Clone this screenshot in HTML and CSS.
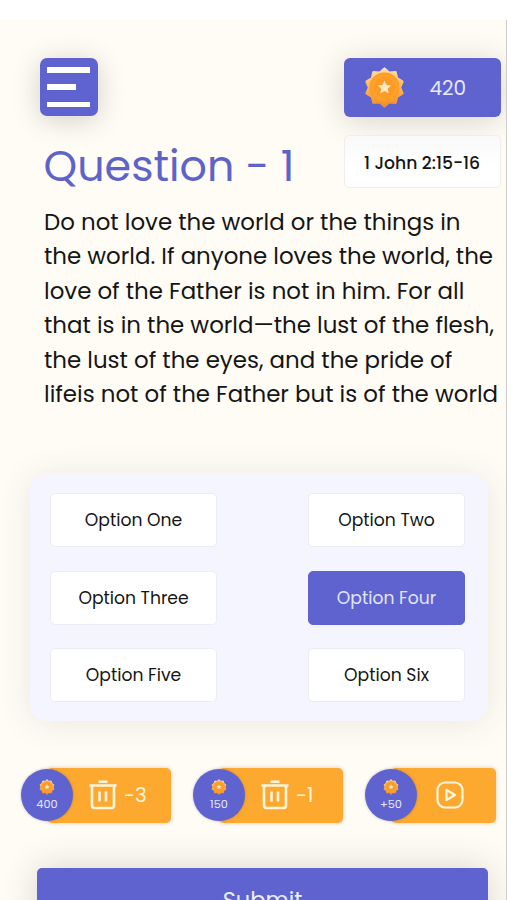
FILE: index.html
```html
<!DOCTYPE html>
<html lang="en">
<head>
  <meta charset="UTF-8" />
  <meta name="viewport" content="width=device-width, initial-scale=1.0" />
  <title>Bible Quiz</title>
  <link rel="stylesheet" href="styles.css">
</head>
<body>
  <!-- Shared icons -->
  <svg class="sprite" width="0" height="0">
    <defs>
      <linearGradient id="gold" x1="0" y1="0" x2="0" y2="1">
        <stop offset="0" stop-color="#ffdca8" />
        <stop offset="0.5" stop-color="#fdb65c" />
        <stop offset="1" stop-color="#f28a2c" />
      </linearGradient>
      <symbol id="medal" viewBox="0 0 48 48">
        <path d="M24 2L29.6 6.9L36.9 6.2L38.6 13.4L44.9 17.2L42 24L44.9 30.8L38.6 34.6L36.9 41.8L29.6 41.1L24 46L18.4 41.1L11.1 41.8L9.4 34.6L3.1 30.8L6 24L3.1 17.2L9.4 13.4L11.1 6.2L18.4 6.9Z" fill="url(#gold)" stroke="url(#gold)" stroke-width="3" stroke-linejoin="round" />
        <circle cx="24" cy="24" r="17" fill="#ffa126" stroke="#f79a2a" stroke-width="1.2" />
        <circle cx="24" cy="24" r="12" fill="#fb9a26" />
        <path d="M24 15.5L26.3 21.2L32 21.7L27.7 25.4L29 31L24 28L19 31L20.3 25.4L16 21.7L21.7 21.2Z" fill="#ffe9c4" />
      </symbol>
      <symbol id="trash" viewBox="0 0 28 30">
        <path d="M0.5 5.5H27.5M9.5 1.8H18.5M3 6V25.5Q3 28 5.5 28H22.5Q25 28 25 25.5V6M10.5 11.5V21.5M17 11.5V21.5" fill="none" stroke="#fff5dc" stroke-width="2.6" />
      </symbol>
      <symbol id="play" viewBox="0 0 28 28">
        <rect x="1.5" y="1.5" width="25" height="25" rx="7.5" fill="none" stroke="#fff5dc" stroke-width="2.2" />
        <path d="M10.5 9V19L19 14Z" fill="none" stroke="#fff5dc" stroke-width="2.2" stroke-linejoin="round" />
      </symbol>
    </defs>
  </svg>

  <main class="quiz">
    <header class="top">
      <div class="top-left">
        <button class="menu" type="button" aria-label="Menu">
          <span class="bar"></span>
          <span class="bar short"></span>
          <span class="bar"></span>
        </button>
        <h1 class="title">Question - 1</h1>
      </div>
      <div class="top-right">
        <div class="score">
          <svg class="score-medal"><use href="#medal" /></svg>
          <span class="score-value">420</span>
        </div>
        <div class="verse">1 John 2:15-16</div>
      </div>
    </header>

    <p class="passage">
      <span class="line">Do not love the world or the things in</span>
      <span class="line">the world. If anyone loves the world, the</span>
      <span class="line">love of the Father is not in him. For all</span>
      <span class="line">that is in the world—the lust of the flesh,</span>
      <span class="line">the lust of the eyes, and the pride of</span>
      <span class="line">lifeis not of the Father but is of the world</span>
    </p>

    <!-- Answers -->
    <section class="options">
      <button class="option" type="button">Option One</button>
      <button class="option" type="button">Option Two</button>
      <button class="option" type="button">Option Three</button>
      <button class="option selected" type="button">Option Four</button>
      <button class="option" type="button">Option Five</button>
      <button class="option" type="button">Option Six</button>
    </section>

    <!-- Helpers -->
    <section class="boosts">
      <div class="boost">
        <div class="cost"><svg class="cost-medal"><use href="#medal" /></svg><span>400</span></div>
        <div class="action"><svg class="trash"><use href="#trash" /></svg><span>-3</span></div>
      </div>
      <div class="boost">
        <div class="cost"><svg class="cost-medal"><use href="#medal" /></svg><span>150</span></div>
        <div class="action"><svg class="trash"><use href="#trash" /></svg><span>-1</span></div>
      </div>
      <div class="boost video">
        <div class="cost"><svg class="cost-medal"><use href="#medal" /></svg><span>+50</span></div>
        <div class="action"><svg class="play"><use href="#play" /></svg></div>
      </div>
    </section>

    <button class="submit" type="button">Submit</button>
  </main>
</body>
</html>
```
FILE: styles.css
```css
* {
  box-sizing: border-box;
}

body {
  margin: 0;
  height: 900px;
  overflow: hidden;
  background: #fff;
  color: #151515;
  font-family: Poppins, Inter, sans-serif;
}

button {
  font: inherit;
  color: inherit;
  border: none;
  padding: 0;
}

.sprite {
  position: absolute;
}

.quiz {
  height: 880px;
  margin-top: 20px;
  padding-top: 38px;
  background: #fffcf6;
  border-right: 1px solid #cfccc9;
  overflow: hidden;
}

.top {
  display: flex;
  justify-content: space-between;
  height: 130px;
  padding: 0 5.5px 0 40px;
}

.menu {
  display: flex;
  flex-direction: column;
  justify-content: space-between;
  width: 58px;
  height: 58px;
  padding: 9px 7px;
  border-radius: 7px;
  background: #5e63cf;
  box-shadow: 0 4px 28px rgba(0, 0, 0, 0.18);
}

.bar {
  width: 43px;
  height: 5.5px;
  background: #fff;
}

.bar.short {
  width: 29px;
}

.title {
  margin: 25px 0 0 3.5px;
  color: #5e63c9;
  font-size: 42.8px;
  font-weight: 400;
  line-height: 50px;
  white-space: nowrap;
}

.top-right {
  width: 157px;
}

.score {
  display: flex;
  align-items: center;
  height: 59px;
  padding-left: 20px;
  border-radius: 6px;
  background: #5e63cf;
  box-shadow: 0 4px 32px rgba(0, 0, 0, 0.16);
}

.score-medal {
  width: 41px;
  height: 41px;
}

.score-value {
  margin-left: 25px;
  color: #e6e8ff;
  font-size: 20px;
  line-height: 28px;
}

.verse {
  height: 53px;
  margin-top: 18px;
  border: 1px solid #efeeec;
  border-radius: 5px;
  background: linear-gradient(#f9f9f9, #fff 60%);
  font-size: 17.2px;
  font-weight: 500;
  line-height: 55px;
  text-align: center;
  white-space: nowrap;
}

.passage {
  margin: 17px 0 0 44px;
  font-size: 22.92px;
  line-height: 34.4px;
}

.line {
  display: block;
  white-space: nowrap;
}

.options {
  display: grid;
  grid-template-columns: 167px 157px;
  grid-auto-rows: 54px;
  justify-content: space-between;
  row-gap: 23.5px;
  width: 458px;
  height: 247px;
  margin: 62.6px 0 0 30px;
  padding: 19px 23px 0 20px;
  border-radius: 17px;
  background: #f5f5ff;
  box-shadow: 0 2px 34px rgba(60, 50, 20, 0.1);
}

.option {
  border: 1px solid #ececf3;
  border-radius: 5px;
  background: #fff;
  font-size: 17.2px;
}

.option.selected {
  border-color: #5e63cf;
  background: #5e63cf;
  color: #e2e5ff;
}

.boosts {
  display: flex;
  gap: 22.5px;
  margin: 47px 0 0 21px;
}

.boost {
  display: flex;
  flex: none;
  align-items: center;
  width: 149.5px;
  height: 55px;
}

.boost.video {
  width: 130.5px;
}

.cost {
  display: flex;
  flex: none;
  flex-direction: column;
  align-items: center;
  z-index: 1;
  width: 52px;
  height: 52px;
  margin-bottom: 1px;
  padding-top: 10px;
  border-radius: 50%;
  background: #5e63cf;
  color: #e6e8ff;
  font-size: 11.3px;
  line-height: 18px;
  box-shadow: 0 0 3px rgba(60, 50, 90, 0.3);
}

.cost-medal {
  width: 16px;
  height: 16px;
}

.action {
  display: flex;
  flex: 1;
  align-items: center;
  height: 55px;
  margin-left: -26px;
  padding: 0 0 2px 42px;
  border-radius: 5px;
  background: #fda92f;
  color: #fff5dc;
  font-size: 20px;
  box-shadow: 0 0 4px rgba(120, 80, 20, 0.3);
}

.trash {
  width: 28px;
  height: 30px;
  margin-right: 7px;
}

.play {
  width: 28px;
  height: 28px;
  margin-left: 2.5px;
}

.submit {
  display: block;
  width: 451px;
  height: 60px;
  margin: 45px 0 0 37px;
  border-radius: 5px;
  background: #5e63cf;
  color: #eceeff;
  font-size: 22.5px;
  line-height: 64px;
  box-shadow: 0 0 36px rgba(0, 0, 0, 0.16);
}
```
